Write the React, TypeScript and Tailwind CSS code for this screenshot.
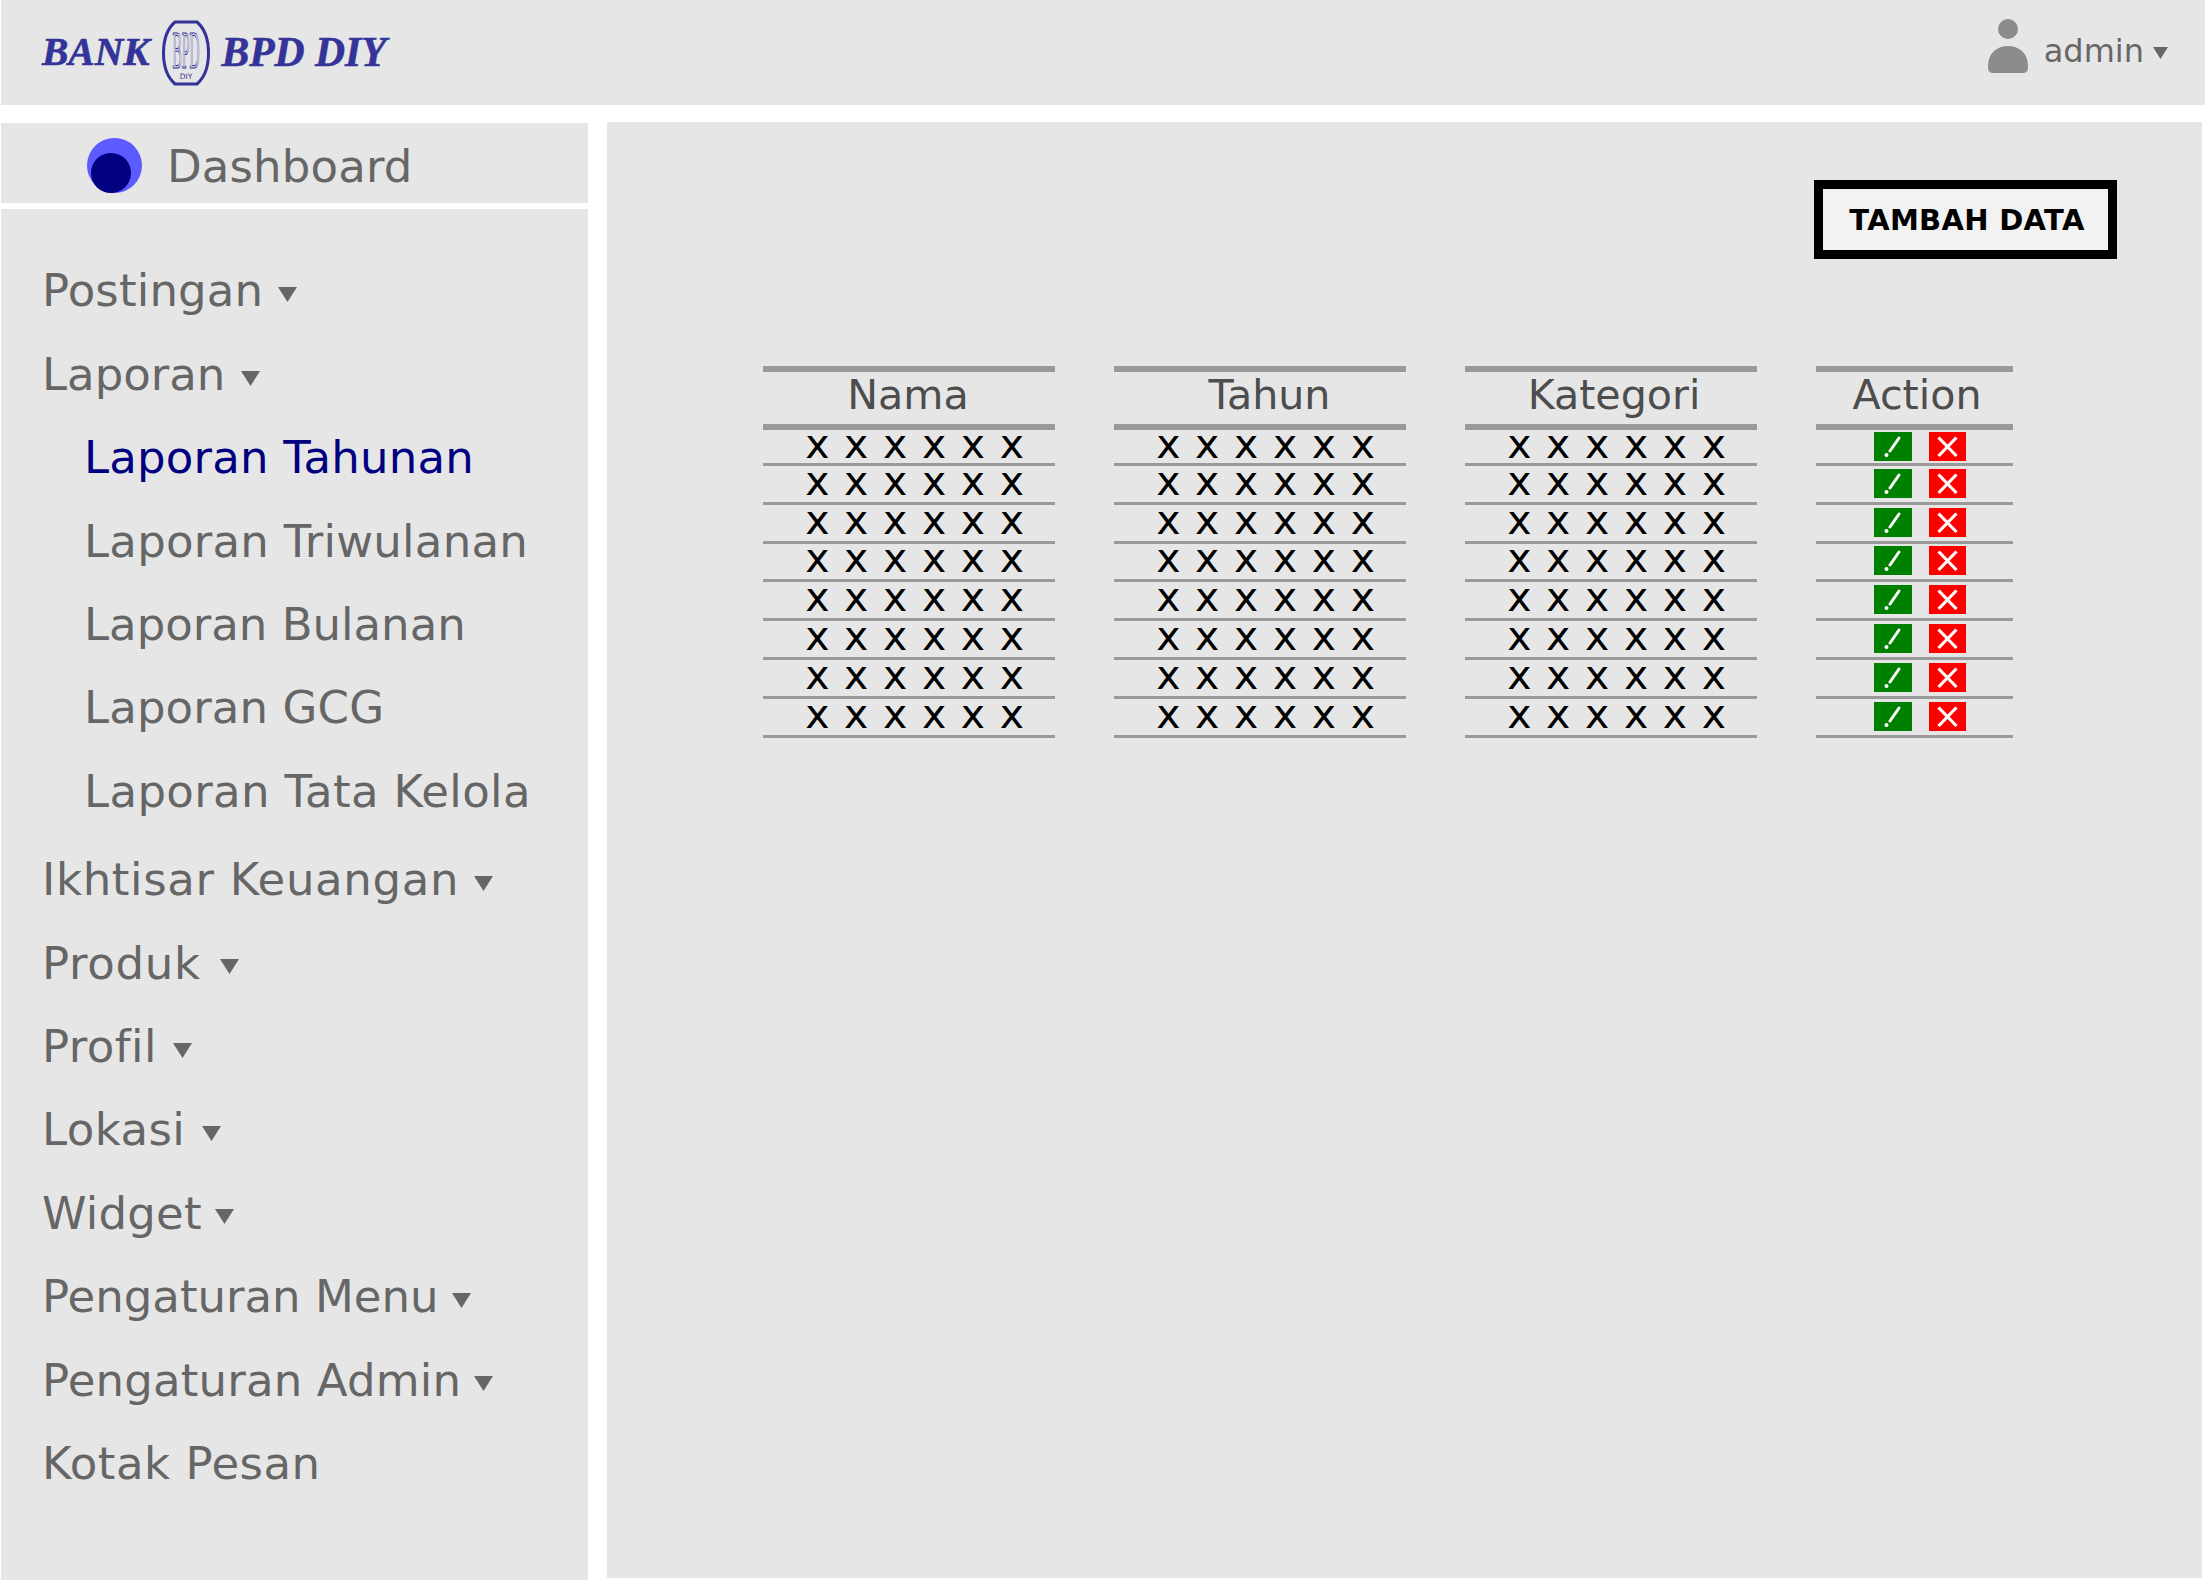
const Caret = ({ w = 19, h = 15, className = "" }: { w?: number; h?: number; className?: string }) => (
  <svg width={w} height={h} viewBox="0 0 19 15" className={className}>
    <polygon points="0,0 19,0 9.5,15" fill="#666666" />
  </svg>
);

const menuTop = [
  { label: "Postingan", t: "tracking-[0.15px]", c: "ml-[15px]" },
  { label: "Laporan", t: "tracking-[0px]", c: "ml-[16px]" },
];
const subs = [
  { label: "Laporan Tahunan", t: "tracking-[0.2px]" },
  { label: "Laporan Triwulanan", t: "tracking-[0.25px]" },
  { label: "Laporan Bulanan", t: "tracking-[0px]" },
  { label: "Laporan GCG", t: "tracking-[0.12px]" },
  { label: "Laporan Tata Kelola", t: "tracking-[0.37px]" },
];
const menuBottom = [
  { label: "Ikhtisar Keuangan", t: "tracking-[0.65px]", c: "ml-[15px]" },
  { label: "Produk", t: "tracking-[0.7px]", c: "ml-[19px]" },
  { label: "Profil", t: "tracking-[0.45px]", c: "ml-[16px]" },
  { label: "Lokasi", t: "tracking-[0.45px]", c: "ml-[17px]" },
  { label: "Widget", t: "tracking-[0.23px]", c: "ml-[13px]" },
  { label: "Pengaturan Menu", t: "tracking-[0px]", c: "ml-[13px]" },
  { label: "Pengaturan Admin", t: "tracking-[0.17px]", c: "ml-[13px]" },
];

const MenuRow = ({ label, t, c }: { label: string; t: string; c?: string }) => (
  <div className="flex h-[83.4px] items-center pl-[41px] text-[45px] text-[#666666]">
    <span className={t}>{label}</span>
    {c && <Caret className={`${c} mt-[7px]`} />}
  </div>
);

const rows = [0, 1, 2, 3, 4, 5, 6, 7];

const Head = ({ label, shift }: { label: string; shift: string }) => (
  <div className="flex h-[64px] w-full items-center justify-center border-y-[6px] border-[#999999] text-[41.2px] text-[#4d4d4d]">
    <span className={`-mt-[4px] ${shift}`}>{label}</span>
  </div>
);

const TextColumn = ({ label, w, shift }: { label: string; w: string; shift: string }) => (
  <div className={`flex flex-col ${w}`}>
    <Head label={label} shift={shift} />
    {rows.map((r) => (
      <div
        key={r}
        className={`flex items-center justify-center border-b-[3px] border-[#999999] text-[41px] leading-[28px] tracking-[0.8px] text-black ${r === 0 ? "h-[36px]" : "h-[38.8px]"}`}
      >
        <span className="-mt-[6px] ml-[12px]">x x x x x x</span>
      </div>
    ))}
  </div>
);

const Emblem = () => (
  <svg width="48" height="66" viewBox="0 0 48 66" className="mx-[12px]">
    <path
      d="M13 2 H35 C43 9 46.5 21 46.5 33 C46.5 45 43 57 35 64 H13 C5 57 1.5 45 1.5 33 C1.5 21 5 9 13 2 Z"
      fill="none"
      stroke="#333399"
      strokeWidth="3"
    />
    <text
      x="24"
      y="48"
      textAnchor="middle"
      fontFamily="'Liberation Serif', serif"
      fontSize="52"
      fill="none"
      stroke="#333399"
      strokeWidth="1.1"
      textLength="27"
      lengthAdjust="spacingAndGlyphs"
    >
      BPD
    </text>
    <text x="24" y="59" textAnchor="middle" fontFamily="'DejaVu Sans', sans-serif" fontSize="7.5" fill="#333399">
      DIY
    </text>
  </svg>
);

export default function App() {
  return (
    <div className="flex h-[1580px] w-[2205px] flex-col overflow-hidden bg-white pl-px font-['DejaVu_Sans',sans-serif]">
      <header className="flex h-[105px] shrink-0 items-center bg-[#e6e6e6] pl-[41px] pr-[37px]">
        <span className="font-['Liberation_Serif',serif] text-[39.5px] font-bold italic leading-none text-[#333399] [-webkit-text-stroke:0.6px_#333399]">
          BANK
        </span>
        <Emblem />
        <span className="font-['Liberation_Serif',serif] text-[41.5px] font-bold italic leading-none text-[#333399] [-webkit-text-stroke:0.6px_#333399]">
          BPD DIY
        </span>
        <div className="ml-auto flex items-center">
          <svg width="40" height="54" viewBox="0 0 40 54" className="mt-[-14px]">
            <circle cx="20" cy="10" r="10" fill="#8c8c8c" />
            <path d="M0 47 C0 34 9 27 20 27 C31 27 40 34 40 47 V49 C40 52 38 54 35 54 H5 C2 54 0 52 0 49 Z" fill="#8c8c8c" />
          </svg>
          <span className="-mt-[3px] ml-[16px] text-[32px] leading-none text-[#666666]">admin</span>
          <Caret w={15} h={12} className="ml-[9px] mt-[0px]" />
        </div>
      </header>

      <div className="mt-[17px] flex min-h-0 flex-1">
        <aside className="flex w-[587px] shrink-0 flex-col">
          <div className="mt-px flex h-[80px] items-center bg-[#e6e6e6] pl-[86px] pt-[5px]">
            <div className="relative h-[55px] w-[55px] rounded-full bg-[#5b5bff]">
              <div className="absolute bottom-0 left-[4px] h-[40px] w-[40px] rounded-full bg-[#000080]" />
            </div>
            <span className="ml-[25px] mt-[2px] text-[45px] tracking-[0.15px] text-[#666666]">Dashboard</span>
          </div>
          <nav className="mt-[6px] flex-1 bg-[#e6e6e6] pt-[40.5px]">
            {menuTop.map((m) => (
              <MenuRow key={m.label} label={m.label} t={m.t} c={m.c} />
            ))}
            {subs.map((s, i) => (
              <div
                key={s.label}
                className={`flex h-[83.4px] items-center pl-[83px] text-[45px] ${s.t} ${i === 0 ? "text-[#000080]" : "text-[#666666]"}`}
              >
                {s.label}
              </div>
            ))}
            <div className="h-[5px]" />
            {menuBottom.map((m) => (
              <MenuRow key={m.label} label={m.label} t={m.t} c={m.c} />
            ))}
            <MenuRow label="Kotak Pesan" t="tracking-[0.5px]" />
          </nav>
        </aside>

        <main className="mb-[2px] ml-[19px] flex w-[1595px] flex-col bg-[#e6e6e6] pl-[156px] pr-[85px] pt-[58px]">
          <button className="flex h-[79px] w-[303px] items-center justify-center self-end border-[9px] border-black bg-[#f2f2f2] pl-[3px] pt-[2px] text-[29px] font-bold tracking-[0.3px] text-black">
            TAMBAH DATA
          </button>
          <div className="mt-[107px] flex">
            <TextColumn label="Nama" w="w-[292px]" shift="-ml-[2px]" />
            <TextColumn label="Tahun" w="ml-[59px] w-[292px]" shift="ml-[19px]" />
            <TextColumn label="Kategori" w="ml-[59px] w-[292px]" shift="ml-[6px]" />
            <div className="ml-[59px] flex w-[197px] flex-col">
              <Head label="Action" shift="ml-[5px]" />
              {rows.map((r) => (
                <div
                  key={r}
                  className={`flex items-center gap-[17px] border-b-[3px] border-[#999999] pl-[58px] ${r === 0 ? "h-[36px]" : "h-[38.8px]"}`}
                >
                  <svg width="38" height="29" viewBox="0 0 38 29" className="-mt-[1px] bg-[#008000]">
                    <path d="M25 6 L16 19" stroke="#fff" strokeWidth="3" strokeLinecap="round" />
                    <circle cx="12.5" cy="23" r="2" fill="#fff" />
                  </svg>
                  <svg width="37" height="29" viewBox="0 0 37 29" className="-mt-[1px] bg-[#ff0000]">
                    <path d="M9.5 5.5 L27.5 24 M27.5 5.5 L9.5 24" stroke="#fff" strokeWidth="3.2" />
                  </svg>
                </div>
              ))}
            </div>
          </div>
        </main>
      </div>
    </div>
  );
}
